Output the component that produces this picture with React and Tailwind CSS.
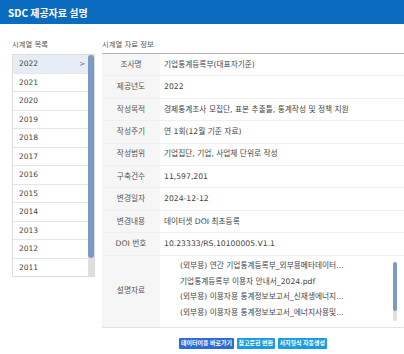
import React from 'react';

const years = ['2022', '2021', '2020', '2019', '2018', '2017', '2016', '2015', '2014', '2013', '2012', '2011'];

const info = [
  ['조사명', '기업통계등록부(대표자기준)'],
  ['제공년도', '2022'],
  ['작성목적', '경제통계조사 모집단, 표본 추출틀, 통계작성 및 정책 지원'],
  ['작성주기', '연 1회(12월 기준 자료)'],
  ['작성범위', '기업집단, 기업, 사업체 단위로 작성'],
  ['구축건수', '11,597,201'],
  ['변경일자', '2024-12-12'],
  ['변경내용', '데이터셋 DOI 최초등록'],
  ['DOI 번호', '10.23333/RS.10100005.V1.1'],
];

const docs = [
  '(외부용) 연간 기업통계등록부_외부용메타데이터...',
  '기업통계등록부 이용자 안내서_2024.pdf',
  '(외부용) 이용자용 통계정보보고서_신재생에너지...',
  '(외부용) 이용자용 통계정보보고서_에너지사용및...',
];

const YearList = () => (
  <div className="flex h-[223px] border border-[#dcdcdc] overflow-hidden">
    <ul className="flex-1">
      {years.map((y, i) => (
        <li
          key={y}
          className={`h-[18.5px] flex items-center justify-between pl-[6px] pr-[3px] border-b border-[#e6e6e6] text-[7.5px] text-[#444] ${i === 0 ? 'bg-[#e6edf6]' : 'bg-white'}`}
        >
          <span>{y}</span>
          {i === 0 && <span className="text-[7px] text-[#666]">&gt;</span>}
        </li>
      ))}
    </ul>
    <div className="w-[6px] bg-[#dedede] flex flex-col">
      <div className="h-[203px] bg-[#7c9bc4] rounded-full" />
    </div>
  </div>
);

const InfoTable = () => (
  <div className="border-t border-[#b5b5b5]">
    {info.map(([label, value]) => (
      <div key={label} className="flex h-[22.4px] border-b border-[#efefef]">
        <div className="w-[58px] bg-[#f6f6f6] flex items-center justify-center text-[#555]">{label}</div>
        <div className="flex-1 flex items-center pl-[4px] text-[#444] whitespace-nowrap">{value}</div>
      </div>
    ))}
    <div className="flex h-[72px] border-b border-[#e3e3e3]">
      <div className="w-[58px] bg-[#f6f6f6] flex items-center justify-center text-[#555]">설명자료</div>
      <div className="flex-1 flex pl-[20px] pr-[7px]">
        <ul className="pt-[3px]">
          {docs.map((d) => (
            <li key={d} className="h-[15.5px] flex items-center text-[#444] whitespace-nowrap">
              {d}
            </li>
          ))}
        </ul>
        <div className="flex-1" />
        <div className="w-[4px] my-[6px] bg-[#e0e0e0] rounded-full flex flex-col">
          <div className="h-[49px] bg-[#7c9bc4] rounded-full" />
        </div>
      </div>
    </div>
  </div>
);

export default function App() {
  return (
    <div className="w-[404px] h-[354px] bg-white overflow-hidden font-['DejaVu_Sans','Noto_Sans_CJK_KR',sans-serif] text-[7.7px]">
      <div className="h-6 bg-[#0b6cbf] flex items-center pl-2 text-white font-bold text-[10px] font-['Noto_Sans_CJK_KR',sans-serif]">
        SDC 제공자료 설명
      </div>

      <div className="flex pt-[13px]">
        <div className="w-[102px] pl-3 pr-[7px]">
          <div className="h-[17px] flex items-center text-[7.3px] text-[#555]">시계열 목록</div>
          <YearList />
        </div>

        <div className="flex-1">
          <div className="h-[16px] flex items-center text-[7.3px] text-[#555]">시계열 자료 정보</div>
          <InfoTable />
          <div className="flex justify-center gap-[2.5px] mt-[10px] font-['Noto_Sans_CJK_KR',sans-serif] font-bold text-[6px] text-white">
            <button className="h-[11px] px-[2px] bg-[#2d6ad6] rounded-[1px] leading-none">데이터이용 바로가기</button>
            <button className="h-[11px] px-[2px] bg-[#1a9de0] rounded-[1px] leading-none">참고문헌 변환</button>
            <button className="h-[11px] px-[2px] bg-[#1a9de0] rounded-[1px] leading-none">서지형식 자동생성</button>
          </div>
        </div>
      </div>
    </div>
  );
}
